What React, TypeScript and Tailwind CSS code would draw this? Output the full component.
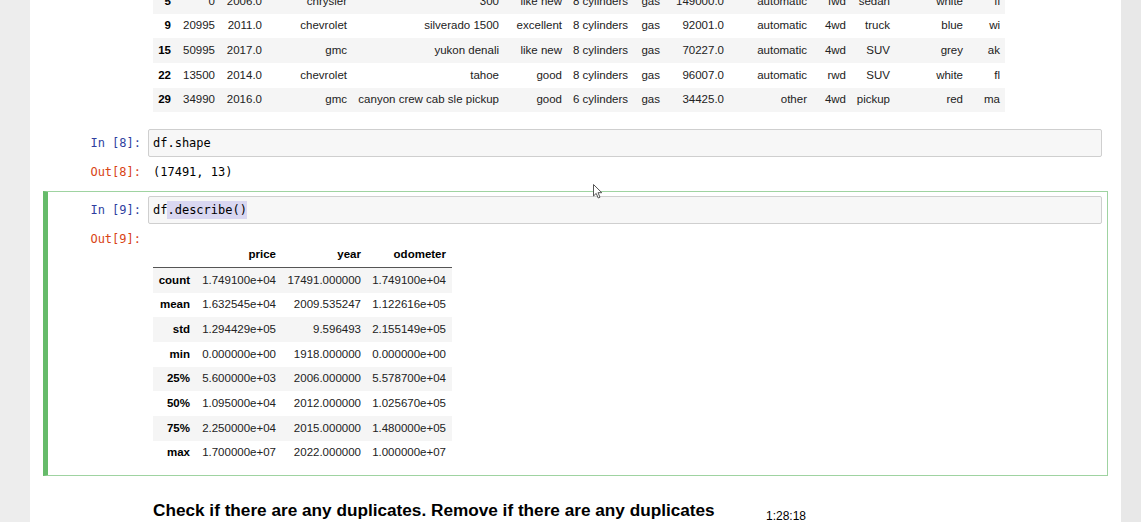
import React from "react";

const prevCols = [
  "w-[23px]", "w-[44px]", "w-[47px]", "w-[85px]", "w-[152px]", "w-[63px]", "w-[66px]",
  "w-[32px]", "w-[64px]", "w-[83px]", "w-[39px]", "w-[44px]", "w-[73px]", "w-[37px]",
];

const prevRows = [
  ["5", "0", "2006.0", "chrysler", "300", "like new", "8 cylinders", "gas", "149000.0", "automatic", "fwd", "sedan", "white", "fl"],
  ["9", "20995", "2011.0", "chevrolet", "silverado 1500", "excellent", "8 cylinders", "gas", "92001.0", "automatic", "4wd", "truck", "blue", "wi"],
  ["15", "50995", "2017.0", "gmc", "yukon denali", "like new", "8 cylinders", "gas", "70227.0", "automatic", "4wd", "SUV", "grey", "ak"],
  ["22", "13500", "2014.0", "chevrolet", "tahoe", "good", "8 cylinders", "gas", "96007.0", "automatic", "rwd", "SUV", "white", "fl"],
  ["29", "34990", "2016.0", "gmc", "canyon crew cab sle pickup", "good", "6 cylinders", "gas", "34425.0", "other", "4wd", "pickup", "red", "ma"],
];

const descCols = ["w-[43px]", "w-[86px]", "w-[85px]", "w-[85px]"];

const descRows = [
  ["count", "1.749100e+04", "17491.000000", "1.749100e+04"],
  ["mean", "1.632545e+04", "2009.535247", "1.122616e+05"],
  ["std", "1.294429e+05", "9.596493", "2.155149e+05"],
  ["min", "0.000000e+00", "1918.000000", "0.000000e+00"],
  ["25%", "5.600000e+03", "2006.000000", "5.578700e+04"],
  ["50%", "1.095000e+04", "2012.000000", "1.025670e+05"],
  ["75%", "2.250000e+04", "2015.000000", "1.480000e+05"],
  ["max", "1.700000e+07", "2022.000000", "1.000000e+07"],
];

const mono = "font-['DejaVu_Sans_Mono',monospace] text-[12px]";
const sans = "font-['Liberation_Sans',Arial,sans-serif] text-[11.5px]";

const Prompt = ({ kind, n }: { kind: "In" | "Out"; n: number }) => (
  <div
    className={`w-[99px] shrink-0 pr-[7px] text-right whitespace-pre ${mono} ${
      kind === "In" ? "text-[#303f9f]" : "text-[#d84315]"
    }`}
  >
    {kind === "In" ? `In [${n}]:` : `Out[${n}]:`}
  </div>
);

const App = () => {
  return (
    <div className="relative flex h-[522px] w-[1141px] overflow-hidden bg-[#ededed]">
      <div className="w-[30px] shrink-0" />
      <div className="w-[1091px] shrink-0 bg-white px-[13px]">
        {/* output of the previous cell, scrolled partly out of view */}
        <div className="-mt-[11px] pl-[110px]">
          <table className={`table-fixed border-collapse text-[#222] ${sans}`}>
            <tbody>
              {prevRows.map((r, i) => (
                <tr key={i} className={`h-[24.7px] ${i % 2 === 0 ? "bg-[#f5f5f5]" : "bg-white"}`}>
                  {r.map((c, j) => (
                    <td
                      key={j}
                      className={`${prevCols[j]} p-0 pr-[5px] text-right whitespace-nowrap leading-none ${
                        j === 0 ? "font-bold text-black" : ""
                      }`}
                    >
                      {c}
                    </td>
                  ))}
                </tr>
              ))}
            </tbody>
          </table>
        </div>

        {/* In [8] */}
        <div className="mt-[16.5px] px-[6px]">
          <div className="flex h-[28px] items-center">
            <Prompt kind="In" n={8} />
            <div className={`flex h-[28px] flex-1 items-center rounded-[2px] border border-[#cfcfcf] bg-[#f7f7f7] pl-[4px] text-black ${mono}`}>
              df.shape
            </div>
          </div>
          <div className="flex h-[30px] items-center">
            <Prompt kind="Out" n={8} />
            <div className={`pl-[5px] text-black ${mono}`}>(17491, 13)</div>
          </div>
        </div>

        {/* In [9], selected */}
        <div className="mt-[4px] border-y border-r border-l-[5px] border-y-[#9fd3a1] border-r-[#9fd3a1] border-l-[#66bb6a] pb-[10px] pl-[1px] pr-[5px] pt-[4px]">
          <div className="flex h-[28px] items-center">
            <Prompt kind="In" n={9} />
            <div className={`flex h-[28px] flex-1 items-center rounded-[2px] border border-[#cfcfcf] bg-[#f7f7f7] pl-[4px] text-black ${mono}`}>
              df<span className="bg-[#d9d7f1]">.describe()</span>
            </div>
          </div>
          <div className="flex">
            <div className="pt-[7px] leading-[17px]">
              <Prompt kind="Out" n={9} />
            </div>
            <div className="pl-[5px] pt-[19px]">
              <table className={`table-fixed border-collapse text-[#222] ${sans}`}>
                <thead>
                  <tr className="h-[25px] border-b border-[#555]">
                    {["", "price", "year", "odometer"].map((h, j) => (
                      <th key={j} className={`${descCols[j]} p-0 pr-[6px] text-right font-bold text-black leading-none`}>
                        {h}
                      </th>
                    ))}
                  </tr>
                </thead>
                <tbody>
                  {descRows.map((r, i) => (
                    <tr key={i} className={`h-[24.7px] ${i % 2 === 0 ? "bg-[#f5f5f5]" : "bg-white"}`}>
                      {r.map((c, j) => (
                        <td
                          key={j}
                          className={`${descCols[j]} p-0 pr-[6px] text-right whitespace-nowrap leading-none ${
                            j === 0 ? "font-bold text-black" : ""
                          }`}
                        >
                          {c}
                        </td>
                      ))}
                    </tr>
                  ))}
                </tbody>
              </table>
            </div>
          </div>
        </div>

        {/* markdown cell */}
        <h3 className="ml-[110px] mt-[23.5px] font-['Liberation_Sans',Arial,sans-serif] text-[17.2px] font-bold leading-[20px] text-black">
          Check if there are any duplicates. Remove if there are any duplicates
        </h3>
      </div>
      <div className="w-[20px] shrink-0 bg-[#e8e8e8]" />

      {/* video timestamp overlay */}
      <div className="absolute left-[766px] top-[509px] font-['Liberation_Sans',Arial,sans-serif] text-[12px] leading-[14px] text-black">
        1:28:18
      </div>

      {/* mouse pointer */}
      <svg className="absolute left-[593px] top-[184px]" width="10" height="15" viewBox="0 0 10 15">
        <path d="M0.5 0.5 L0.5 12 L3.2 9.4 L5.2 14 L7 13.2 L5 8.7 L8.8 8.7 Z" fill="#fff" stroke="#555" strokeWidth="1" />
      </svg>
    </div>
  );
};

export default App;
